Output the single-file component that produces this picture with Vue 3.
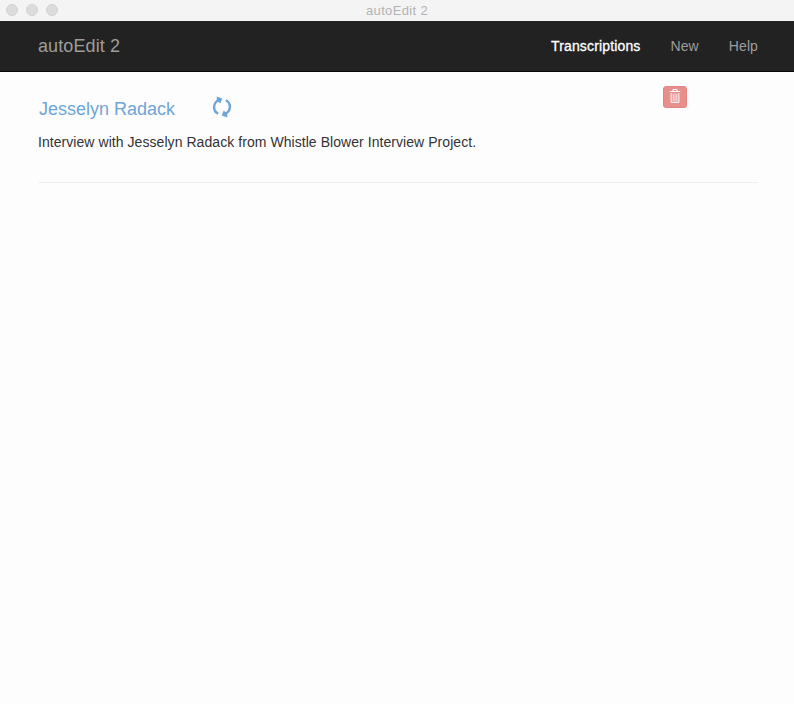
<script setup>
const links = [
  { label: 'Transcriptions', active: true },
  { label: 'New', active: false },
  { label: 'Help', active: false },
]
const transcriptions = [
  {
    title: 'Jesselyn Radack',
    description: 'Interview with Jesselyn Radack from Whistle Blower Interview Project.',
  },
]
</script>

<template>
  <div class="window">
    <header class="titlebar">
      <div class="controls"><i></i><i></i><i></i></div>
      <span class="window-title">autoEdit 2</span>
    </header>
    <nav class="navbar">
      <a class="brand">autoEdit 2</a>
      <div class="links">
        <a v-for="l in links" :key="l.label" :class="{ active: l.active }">{{ l.label }}</a>
      </div>
    </nav>
    <main class="content">
      <article v-for="t in transcriptions" :key="t.title" class="item">
        <div class="heading">
          <a class="name">{{ t.title }}</a>
          <svg class="sync" viewBox="0 0 20 22" width="20" height="22">
            <g fill="none" stroke="#6fa5d6" stroke-width="2.4">
              <path d="M6.2 17.7C.6 14.8.5 7.2 7.2 3.8" />
              <path d="M13.8 4.3C19.4 7.2 19.5 14.8 12.8 18.2" />
            </g>
            <path fill="#6fa5d6" d="M4.7.6L10.3 2.4 8.3 7.6 4.8 4.6zM15.3 21.4L9.7 19.6 11.7 14.4 15.2 17.4z" />
          </svg>
          <button class="delete" aria-label="Delete">
            <svg viewBox="0 0 12 14" width="12" height="14" fill="none" stroke="#fff">
              <path d="M.7 2.5h10.6M4 2.5v-2h4v2" />
              <path d="M2.1 4v9.4h7.8V4" />
              <path d="M4.2 4.5v8M6 4.5v8M7.8 4.5v8" stroke-width=".8" />
            </svg>
          </button>
        </div>
        <p>{{ t.description }}</p>
      </article>
    </main>
  </div>
</template>

<style>
body {
  margin: 0;
  background: #fdfdfd;
}
</style>

<style scoped>
.window {
  height: 704px;
  overflow: hidden;
  background: #fdfdfd;
  font-family: "Liberation Sans", Arial, sans-serif;
  font-size: 14px;
  color: #333;
}
.titlebar {
  display: grid;
  grid-template-columns: 1fr auto 1fr;
  align-items: center;
  height: 21px;
  background: #f4f4f4;
}
.controls {
  display: flex;
  gap: 8px;
  padding-left: 6px;
}
.controls i {
  box-sizing: border-box;
  width: 12px;
  height: 12px;
  margin-top: -1px;
  border: 1px solid #d2d2d2;
  border-radius: 50%;
  background: #dcdcdc;
}
.window-title {
  font-size: 13px;
  line-height: 20px;
  letter-spacing: 0.35px;
  color: #b2b2b2;
}
.navbar {
  box-sizing: border-box;
  display: flex;
  justify-content: space-between;
  height: 51px;
  padding: 0 36px 0 38px;
  background: #222;
  border-bottom: 1px solid #080808;
  line-height: 50px;
  color: #9d9d9d;
}
.brand {
  font-size: 18px;
  letter-spacing: 0.1px;
}
.links {
  display: flex;
  gap: 30px;
  letter-spacing: 0.1px;
}
.active {
  color: #fff;
  letter-spacing: 0.15px;
  -webkit-text-stroke: 0.3px #fff;
}
.content {
  padding: 14px 36px 0 38px;
}
.item {
  height: 96px;
  border-bottom: 1px solid #eee;
}
.heading {
  display: flex;
  align-items: flex-start;
  height: 46px;
}
.name {
  width: 173px;
  padding: 11px 0 0 1px;
  font-size: 18px;
  line-height: 24px;
  color: #6fa5d6;
}
.sync {
  margin-top: 10px;
}
.delete {
  box-sizing: border-box;
  display: flex;
  align-items: flex-start;
  justify-content: center;
  width: 24px;
  height: 22px;
  margin: 0 71px 0 auto;
  padding: 2px 0 0;
  border: 1px solid #e38481;
  border-radius: 3px;
  background: #e88e8b;
}
p {
  margin: 0;
  line-height: 20px;
  letter-spacing: 0.058px;
}
</style>
